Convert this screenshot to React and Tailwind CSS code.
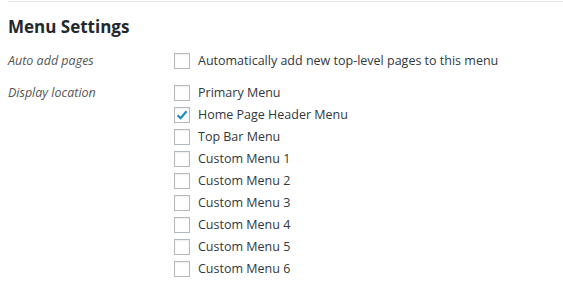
import React from "react";

const locations = [
  { name: "Primary Menu", checked: false },
  { name: "Home Page Header Menu", checked: true },
  { name: "Top Bar Menu", checked: false },
  { name: "Custom Menu 1", checked: false },
  { name: "Custom Menu 2", checked: false },
  { name: "Custom Menu 3", checked: false },
  { name: "Custom Menu 4", checked: false },
  { name: "Custom Menu 5", checked: false },
  { name: "Custom Menu 6", checked: false },
];

const Checkbox = ({ checked }) => (
  <span className="flex h-4 w-4 shrink-0 items-center justify-center border border-[#b4b9be] bg-white shadow-[inset_0_1px_2px_rgba(0,0,0,0.07)]">
    {checked && (
      <svg width="14" height="14" viewBox="0 0 14 14">
        <path d="M2.5 7.2 L5.6 10.2 L11.6 3.2" fill="none" stroke="#1e8cbe" strokeWidth="2.2" />
      </svg>
    )}
  </span>
);

const Row = ({ label, checked }) => (
  <label className="flex h-[22px] items-center gap-2">
    <Checkbox checked={checked} />
    <span className="text-[12.5px] text-[#32373c]">{label}</span>
  </label>
);

export default function App() {
  return (
    <div className="h-[298px] w-[563px] bg-white pl-2 pt-px font-['Open_Sans',sans-serif]">
      <div className="border-t border-[#e5e5e5]">
        <h3 className="mt-[13px] text-[17px] font-bold leading-[24px] text-[#23282d]">Menu Settings</h3>

        <div className="mt-[11px] grid grid-cols-[166px_1fr]">
          <div className="flex h-[22px] items-center text-[12.5px] italic text-[#555]">Auto add pages</div>
          <div>
            <Row label="Automatically add new top-level pages to this menu" checked={false} />
          </div>
        </div>

        <div className="mt-[10px] grid grid-cols-[166px_1fr]">
          <div className="flex h-[22px] items-center text-[12.5px] italic text-[#555]">Display location</div>
          <div className="flex flex-col">
            {locations.map((loc) => (
              <Row key={loc.name} label={loc.name} checked={loc.checked} />
            ))}
          </div>
        </div>
      </div>
    </div>
  );
}
